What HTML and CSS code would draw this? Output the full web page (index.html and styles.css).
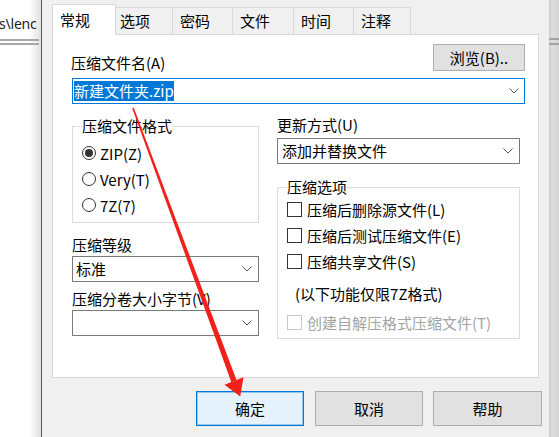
FILE: index.html
```html
<!DOCTYPE html>
<html lang="zh-CN">
<head>
<meta charset="utf-8">
<title>压缩文件名和参数</title>
<link rel="stylesheet" href="styles.css">
</head>
<body>
<div class="screen">
  <div class="behind-left">
    <div class="path">s\lenc</div>
    <div class="rule"></div>
  </div>

  <div class="dialog">
    <div class="tabs">
      <div class="tab active w64">常规</div>
      <div class="tab w58 pad4">选项</div>
      <div class="tab w61">密码</div>
      <div class="tab w62">文件</div>
      <div class="tab w61">时间</div>
      <div class="tab w58">注释</div>
    </div>

    <div class="panel">
      <div class="name-row">
        <div class="lbl">压缩文件名(A)</div>
        <button class="btn browse">浏览(B)..</button>
      </div>
      <div class="field focus">
        <span class="sel">新建文件夹.zip</span>
        <svg class="chev" viewBox="0 0 10 6"><path d="M0.5 0.5 L5 5 L9.5 0.5" fill="none" stroke="#555" stroke-width="1"/></svg>
      </div>

      <div class="cols">
        <div class="col col-left">
          <fieldset class="group fmt">
            <legend>压缩文件格式</legend>
            <div class="opt"><span class="rb checked"></span>ZIP(Z)</div>
            <div class="opt"><span class="rb"></span>Very(T)</div>
            <div class="opt"><span class="rb"></span>7Z(7)</div>
          </fieldset>

          <div class="lbl lbl-level">压缩等级</div>
          <div class="field sm">
            <span>标准</span>
            <svg class="chev" viewBox="0 0 10 6"><path d="M0.5 0.5 L5 5 L9.5 0.5" fill="none" stroke="#555" stroke-width="1"/></svg>
          </div>

          <div class="lbl lbl-vol">压缩分卷大小字节(V)</div>
          <div class="field sm">
            <span></span>
            <svg class="chev" viewBox="0 0 10 6"><path d="M0.5 0.5 L5 5 L9.5 0.5" fill="none" stroke="#555" stroke-width="1"/></svg>
          </div>
        </div>

        <div class="col col-right">
          <div class="lbl lbl-update">更新方式(U)</div>
          <div class="field sm upd">
            <span>添加并替换文件</span>
            <svg class="chev" viewBox="0 0 10 6"><path d="M0.5 0.5 L5 5 L9.5 0.5" fill="none" stroke="#555" stroke-width="1"/></svg>
          </div>

          <fieldset class="group opts">
            <legend>压缩选项</legend>
            <div class="opt"><span class="cb"></span>压缩后删除源文件(L)</div>
            <div class="opt"><span class="cb"></span>压缩后测试压缩文件(E)</div>
            <div class="opt"><span class="cb"></span>压缩共享文件(S)</div>
            <div class="opt note">(以下功能仅限7Z格式)</div>
            <div class="opt disabled"><span class="cb"></span>创建自解压格式压缩文件(T)</div>
          </fieldset>
        </div>
      </div>
    </div>

    <div class="buttons">
      <button class="btn big ok">确定</button>
      <button class="btn big cancel">取消</button>
      <button class="btn big help">帮助</button>
    </div>
  </div>

  <div class="behind-right">
    <div class="rule2"></div>
  </div>
</div>

<svg class="arrow" width="559" height="437" viewBox="0 0 559 437">
  <polygon points="132.2,108.3 133.8,107.7 236.6,380.2 231.4,382.2" fill="#f2201a"/>
  <polygon points="224.5,384.8 243.5,377.2 240.2,396.5" fill="#f2201a"/>
</svg>
</body>
</html>
```

FILE: styles.css
```css
* { box-sizing: border-box; }

html, body { margin: 0; padding: 0; }

body {
  width: 559px;
  height: 437px;
  overflow: hidden;
  position: relative;
  background: #fff;
  font-family: "Noto Sans CJK SC", "Noto Sans", sans-serif;
  font-size: 15px;
  color: #000;
}

.screen { display: flex; height: 437px; }

/* window behind, left */
.behind-left {
  width: 41px;
  flex: none;
  overflow: hidden;
  padding-top: 15px;
  background: linear-gradient(to right, #ffffff 0, #ffffff 72%, #e0e0e0 100%);
}
.path {
  white-space: nowrap;
  margin-left: -1px;
  line-height: 18px;
  font-family: "Noto Sans", sans-serif;
  font-size: 14px;
  letter-spacing: -0.2px;
  color: #222;
}
.rule {
  margin-top: 6px;
  width: 39px;
  height: 6px;
  border-top: 2px solid #a8a8a8;
  border-bottom: 2px solid #a8a8a8;
}

/* window behind, right */
.behind-right {
  flex: 1;
  padding-top: 38px;
  background: linear-gradient(to right, #cbcbcb 0, #dddddd 30%, #d5d5d5 100%);
}
.rule2 {
  height: 7px;
  border-top: 2px solid #a2a2a2;
  border-bottom: 2px solid #a2a2a2;
}

/* dialog */
.dialog {
  width: 508px;
  flex: none;
  background: #f0f0f0;
  border-left: 1px solid #5c5c5c;
  padding: 4px 7px 0 10px;
  display: flex;
  flex-direction: column;
}

.tabs { display: flex; align-items: flex-end; height: 30px; }
.tab {
  height: 27px;
  border: 1px solid #d9d9d9;
  border-bottom: none;
  background: #f0f0f0;
  margin-left: -1px;
  padding-left: 7px;
  line-height: 26px;
  white-space: nowrap;
}
.tab.active {
  height: 31px;
  margin-left: 0;
  margin-bottom: -1px;
  background: #fff;
  position: relative;
  z-index: 1;
  line-height: 30px;
}
.w64 { width: 64px; }
.w58 { width: 58px; }
.w61 { width: 61px; }
.w62 { width: 62px; }
.pad4 { padding-left: 4px; }

.panel {
  width: 487px;
  height: 344px;
  background: #fff;
  border: 1px solid #d9d9d9;
  padding: 9px 13px 0 19px;
}

.lbl { line-height: 18px; white-space: nowrap; }

.name-row {
  display: flex;
  justify-content: space-between;
  align-items: flex-end;
  height: 27px;
}
.name-row .lbl { margin-bottom: -1px; margin-left: -1px; }

.btn {
  font: inherit;
  color: #000;
  background: #e1e1e1;
  border: 1px solid #adadad;
  padding: 0;
  display: flex;
  align-items: center;
  justify-content: center;
  line-height: 18px;
}
.browse { width: 92px; height: 27px; }

.field {
  height: 26px;
  background: #fff;
  border: 1px solid #7a7a7a;
  display: flex;
  align-items: center;
  justify-content: space-between;
  padding: 0 6px 0 3px;
  line-height: 18px;
  white-space: nowrap;
}
.field.focus {
  margin-top: 7px;
  border-color: #0078d7;
  padding: 0 5px 0 1px;
}
.field.upd { padding-left: 4px; }
.sel {
  display: inline-block;
  background: #0078d7;
  color: #fff;
  line-height: 20px;
}
.chev { width: 10px; height: 6px; flex: none; }

.cols { display: flex; gap: 18px; }
.col-left { width: 187px; }
.col-right { width: 243px; }

.group {
  margin: 0;
  min-width: 0;
  border: 1px solid #dcdcdc;
  padding: 0 0 0 9px;
}
.group legend { padding: 0; line-height: 18px; }

.fmt { margin-top: 13px; padding-top: 5px; padding-bottom: 4px; }
.opts { margin-top: 14px; padding-bottom: 3px; }

.opt {
  display: flex;
  align-items: center;
  height: 26px;
  white-space: nowrap;
}

.rb {
  width: 14px;
  height: 14px;
  border: 1px solid #333;
  border-radius: 50%;
  background: #fff;
  margin-right: 4px;
  flex: none;
  display: flex;
  align-items: center;
  justify-content: center;
}
.rb.checked::after {
  content: "";
  width: 8px;
  height: 8px;
  border-radius: 50%;
  background: #333;
}

.cb {
  width: 15px;
  height: 15px;
  border: 1px solid #333;
  background: #fff;
  margin-right: 5px;
  flex: none;
}

.note { margin-top: 6px; padding-left: 8px; }
.disabled { margin-top: 3px; color: #a3a3a3; }
.disabled .cb { border-color: #c6c6c6; }

.lbl-level { margin-top: 13px; }
.lbl-vol { margin-top: 8px; }
.lbl-level + .field, .lbl-vol + .field { margin-top: 2px; }
.lbl-update { margin-top: 12px; }
.lbl-update + .field { margin-top: 4px; }

.buttons {
  display: flex;
  justify-content: flex-end;
  margin-top: 13px;
}
.big { width: 108px; height: 35px; }
.ok {
  background: #e5f1fb;
  border-color: #0078d7;
  box-shadow: inset 0 0 0 1px rgba(0, 120, 215, 0.35);
}
.cancel { margin-left: 11px; }
.help { margin-left: 10px; width: 109px; }

.arrow {
  position: absolute;
  left: 0;
  top: 0;
  pointer-events: none;
}
```
